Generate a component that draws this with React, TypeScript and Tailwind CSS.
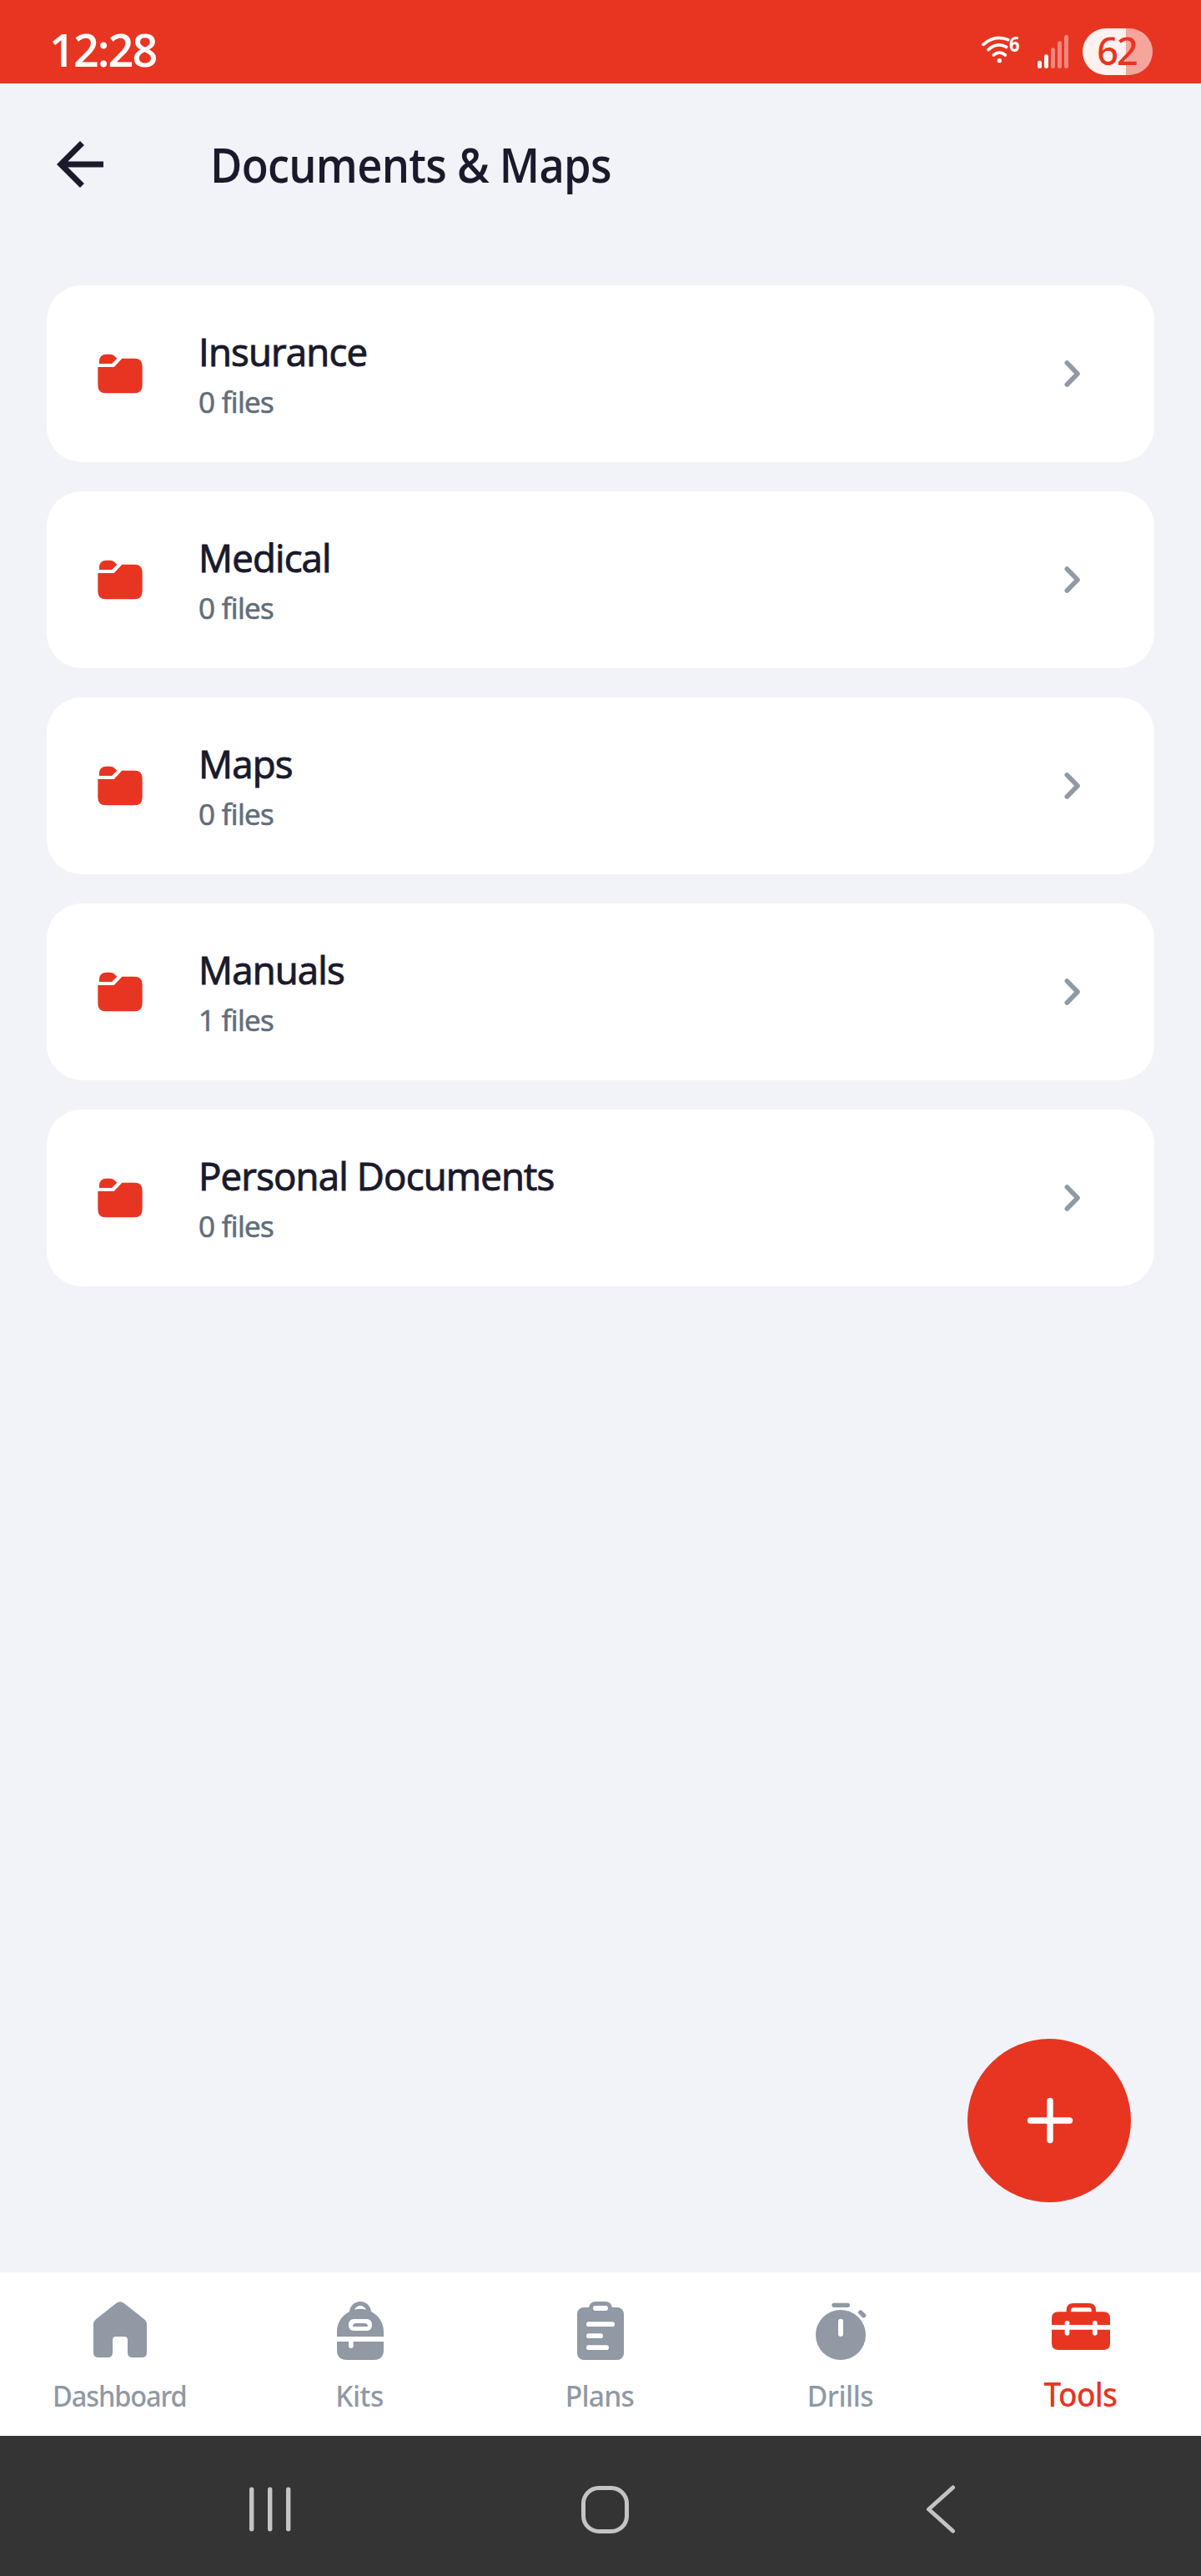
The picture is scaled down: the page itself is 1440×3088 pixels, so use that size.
import React, { useState } from "react";

interface Folder {
  name: string;
  files: number;
}

interface Tab {
  label: string;
  icon: React.ReactNode;
  fit: string;
}

const folders: Folder[] = [
  { name: "Insurance", files: 0 },
  { name: "Medical", files: 0 },
  { name: "Maps", files: 0 },
  { name: "Manuals", files: 1 },
  { name: "Personal Documents", files: 0 },
];

const HomeIcon = () => (
  <svg viewBox="0 0 216 216" className="w-[72px] h-[72px]" fill="currentColor">
    <path d="M94 9q14-11 28 0l72 57q10 8 10 19v101q0 18-18 18h-33q-18 0-18-18v-45q0-12-12-12h-30q-12 0-12 12v45q0 18-18 18H30q-18 0-18-18V85q0-11 10-19z" />
  </svg>
);

const BackpackIcon = () => (
  <svg viewBox="0 0 216 216" className="w-[72px] h-[72px]" fill="currentColor">
    <path d="M24 129V111C24 79 42 53 69 39C71 18 87 3 108 3S145 18 147 39C174 53 192 79 192 111V129Z" />
    <path d="M24 147H192V177Q192 213 156 213H60Q24 213 24 177Z" />
    <path d="M87 32Q95 18 108 18T129 32Q108 27 87 32Z" fill="white" />
    <rect x="66" y="66" width="84" height="42" rx="18" fill="white" />
    <path d="M81 93Q81 81 93 81H123Q135 81 135 93Z" />
    <path d="M66 140H83V163Q83 171 74.500 171T66 163Z" fill="white" />
  </svg>
);

const ClipboardIcon = () => (
  <svg viewBox="0 0 216 216" className="w-[72px] h-[72px]" fill="currentColor">
    <rect x="24" y="24" width="168" height="189" rx="24" />
    <rect x="66" y="3" width="84" height="48" rx="24" />
    <g fill="white">
      <rect x="81" y="18" width="54" height="18" rx="9" />
      <rect x="57" y="76" width="102" height="17" rx="8.5" />
      <rect x="57" y="118" width="60" height="17" rx="8.5" />
      <rect x="57" y="160" width="81" height="17" rx="8.5" />
    </g>
  </svg>
);

const StopwatchIcon = () => (
  <svg viewBox="0 0 216 216" className="w-[72px] h-[72px]" fill="currentColor">
    <circle cx="108" cy="123" r="90" />
    <rect x="76" y="8" width="65" height="16" rx="8" />
    <path d="M179 42L191 53" stroke="currentColor" strokeWidth="16" strokeLinecap="round" />
    <rect x="99" y="65" width="18" height="64" rx="9" fill="white" />
  </svg>
);

const ToolboxIcon = () => (
  <svg viewBox="0 0 216 216" className="w-[72px] h-[72px]" fill="currentColor">
    <path d="M64 46V34Q64 17 81 17H137Q154 17 154 34V46" fill="none" stroke="currentColor" strokeWidth="16" />
    <path d="M3 87V64Q3 40 27 40H189Q213 40 213 64V87Z" />
    <path d="M3 104H213V153Q213 177 189 177H27Q3 177 3 153Z" />
    <g fill="white">
      <rect x="50" y="72" width="17" height="53" rx="8.5" />
      <rect x="150" y="72" width="17" height="53" rx="8.5" />
    </g>
  </svg>
);

const FolderIcon = () => (
  <svg viewBox="0 0 162 144" className="w-[54px] h-[48px] text-[#e83521]" fill="currentColor">
    <path d="M6 36V28Q6 2 32 2H46Q54 2 59 7L70 17L51 36Z" />
    <path d="M1 48H59L88 17H133Q161 17 161 45V113Q161 142 133 142H29Q1 142 1 113Z" />
  </svg>
);

const tabs: Tab[] = [
  { label: "Dashboard", icon: <HomeIcon />, fit: "tracking-[-1.2px] scale-x-[0.93]" },
  { label: "Kits", icon: <BackpackIcon />, fit: "tracking-[-0.5px] scale-x-[0.96]" },
  { label: "Plans", icon: <ClipboardIcon />, fit: "tracking-[-0.8px] scale-x-[0.96]" },
  { label: "Drills", icon: <StopwatchIcon />, fit: "tracking-[-0.5px] scale-x-[0.96]" },
  { label: "Tools", icon: <ToolboxIcon />, fit: "tracking-[-0.8px] scale-x-[0.925]" },
];

function StatusBar() {
  return (
    <div className="h-[100px] shrink-0 bg-[#e83521] text-white flex justify-between pl-[59px] pr-[58px]">
      <span className="mt-[29px] text-[54px] leading-[60px] font-semibold tracking-[-2px]">12:28</span>

      <div className="flex items-start">
        {/* Wi-Fi 6 */}
        <div className="flex mt-[42px] w-[49px]">
          <svg viewBox="105 126 147 105" className="w-[49px] h-[35px] shrink-0" fill="none" stroke="white" strokeWidth="11" strokeLinecap="round">
            <path d="M117 160Q158 123 206 143" />
            <path d="M135 179Q166 150 200 169" />
            <path d="M154 198Q175 181 196 198" />
            <circle cx="175" cy="218" r="8" fill="white" stroke="none" />
          </svg>
          <span className="-ml-[14px] -mt-[2px] w-[15px] text-[25px] leading-[24px] font-bold scale-x-[0.88] origin-left">6</span>
        </div>

        {/* Signal strength */}
        <svg viewBox="312 127 111 120" className="mt-[42.3px] ml-[20px] w-[37px] h-[40px]" fill="white">
          <rect x="312" y="219" width="15" height="28" rx="7" />
          <rect x="336" y="197" width="15" height="50" rx="7" />
          <g opacity="0.4">
            <rect x="360" y="173" width="15" height="74" rx="7" />
            <rect x="384" y="149" width="15" height="98" rx="7" />
            <rect x="408" y="127" width="15" height="120" rx="7" />
          </g>
        </svg>

        {/* Battery */}
        <div className="mt-[34px] ml-[17px] w-[84px] h-[56px] rounded-full bg-linear-to-r from-[#fef1ef] from-[62%] to-[#f6a59b] to-[62%] flex items-center justify-center text-[#e83521] text-[45px] leading-[56px] font-medium font-['Noto_Sans',sans-serif]">
          <span className="-translate-x-[1px] -translate-y-[1px] tracking-[-2px]">62</span>
        </div>
      </div>
    </div>
  );
}

function FolderCard({ folder }: { folder: Folder }) {
  return (
    <button className="w-full h-[212px] bg-white rounded-[42px] pl-[61px] pr-[86px] flex items-center text-left cursor-pointer">
      <FolderIcon />
      <span className="ml-[67px] mt-[1px] flex-1 flex flex-col gap-[7px]">
        <span className="text-[46.500px] leading-[60px] tracking-[-0.850px] scale-x-[0.98] origin-left text-[#1a1a2c] [-webkit-text-stroke:1px_#1a1a2c]">
          {folder.name}
        </span>
        <span className="text-[35px] leading-[48px] tracking-[-0.700px] text-[#626d7b] [-webkit-text-stroke:0.7px_#626d7b]">
          {folder.files} files
        </span>
      </span>
      <svg viewBox="0 0 24 36" className="w-[24px] h-[36px]" fill="none" stroke="#9099a4" strokeWidth="5.6" strokeLinecap="round" strokeLinejoin="round">
        <path d="M5.300 5L18 18L5.300 31" />
      </svg>
    </button>
  );
}

export default function App() {
  const [activeTab, setActiveTab] = useState("Tools");

  return (
    <div className="relative w-[1440px] h-[3088px] flex flex-col bg-[#f2f3f8] overflow-hidden font-['Open_Sans','Noto_Sans',sans-serif]">
      <StatusBar />

      {/* Header */}
      <header className="h-[194px] shrink-0 flex items-center pl-[54px] text-[#1a1a2c]">
        <svg viewBox="0 0 24 24" className="w-[84px] h-[84px]" fill="currentColor">
          <path d="M20 11H7.830l5.590-5.590L12 4l-8 8 8 8 1.410-1.410L7.830 13H20z" />
        </svg>
        <h1 className="ml-[114px] text-[57px] leading-[72px] font-semibold tracking-[-0.800px] scale-x-[0.92] origin-left whitespace-nowrap">
          Documents &amp; Maps
        </h1>
      </header>

      {/* Folder list */}
      <main className="flex-1 px-14 pt-12 flex flex-col gap-[35px]">
        {folders.map((folder) => (
          <FolderCard key={folder.name} folder={folder} />
        ))}
      </main>

      {/* Add button */}
      <button className="absolute right-[84px] bottom-[448px] w-[196px] h-[196px] rounded-full bg-[#e83521] flex items-center justify-center cursor-pointer">
        <svg viewBox="0 0 56 56" className="w-[56px] h-[56px] translate-x-[1px]" stroke="white" strokeWidth="7.4" strokeLinecap="round">
          <path d="M28 4.500V51.500M4.500 28H51.500" />
        </svg>
      </button>

      {/* Bottom tabs */}
      <nav className="h-[196px] shrink-0 bg-white grid grid-cols-5 font-['Noto_Sans',sans-serif]">
        {tabs.map((tab) => (
          <button
            key={tab.label}
            onClick={() => setActiveTab(tab.label)}
            className={`flex flex-col items-center pt-[34px] cursor-pointer ${
              activeTab === tab.label ? "text-[#e83521]" : "text-[#9099a4]"
            }`}
          >
            {tab.icon}
            <span
              className={`mt-[18px] font-medium -translate-x-[1px] ${tab.fit} ${
                activeTab === tab.label ? "text-[40px] leading-[44px]" : "text-[35px] leading-[48px]"
              }`}
            >
              {tab.label}
            </span>
          </button>
        ))}
      </nav>

      {/* System navigation */}
      <div className="h-[168px] shrink-0 bg-[#343434] flex items-center pl-[299px] pt-[8px]">
        <svg viewBox="0 0 50 54" className="w-[50px] h-[54px]" fill="#c4c4c4">
          <rect x="0" y="0.500" width="5.400" height="53" rx="2.700" />
          <rect x="22" y="0.500" width="5.400" height="53" rx="2.700" />
          <rect x="44" y="0.500" width="5.400" height="53" rx="2.700" />
        </svg>
        <div className="ml-[348px] w-[57px] h-[57px] rounded-[21px] border-[5.500px] border-[#c4c4c4]" />
        <svg viewBox="0 0 36 58" className="ml-[356px] w-[36px] h-[58px]" fill="none" stroke="#c4c4c4" strokeWidth="5" strokeLinecap="round" strokeLinejoin="round">
          <path d="M32.500 3L3.500 29L32.500 55" />
        </svg>
      </div>
    </div>
  );
}
